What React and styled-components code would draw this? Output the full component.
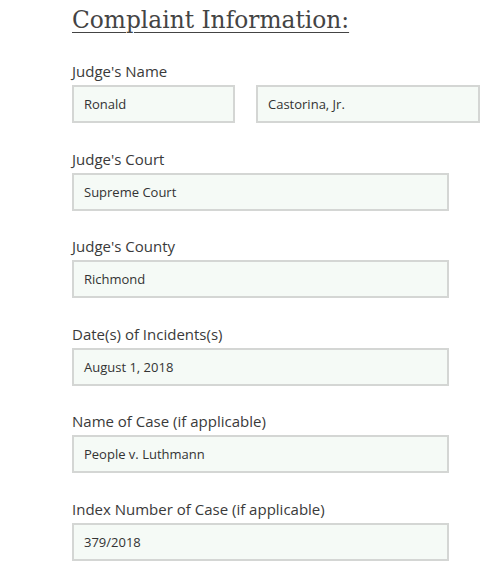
import React from 'react'
import styled, { createGlobalStyle } from 'styled-components'

const GlobalStyle = createGlobalStyle`
  body {
    margin: 0;
    background: #fff;
    font-family: 'Open Sans', 'Liberation Sans', sans-serif;
  }
`

const Page = styled.div`
  padding: 2px 0 0 72px;
`

const Title = styled.h2`
  font-family: 'DejaVu Serif', 'Liberation Serif', serif;
  font-weight: 400;
  font-size: 23.3px;
  color: #444;
  text-decoration: underline;
  text-decoration-thickness: 1px;
  text-underline-offset: 4px;
  margin: 0 0 23px;
  line-height: 36px;
`

const Field = styled.div`
  margin-bottom: 25.6px;
`

const Label = styled.div`
  font-size: 15px;
  color: #3a3a3a;
  line-height: 20px;
  margin-bottom: 4px;
`

const Row = styled.div`
  display: flex;
  gap: 21px;
`

const Input = styled.div`
  box-sizing: border-box;
  width: ${p => p.$w || 377}px;
  height: 38px;
  border: 2px solid #d4d6d4;
  background: #f5faf6;
  padding: 0 10px;
  display: flex;
  align-items: center;
  font-size: 13px;
  color: #333;
`

const fields = [
  ["Judge's Court", 'Supreme Court'],
  ["Judge's County", 'Richmond'],
  ['Date(s) of Incidents(s)', 'August 1, 2018'],
  ['Name of Case (if applicable)', 'People v. Luthmann'],
  ['Index Number of Case (if applicable)', '379/2018'],
]

export default function App() {
  return (
    <Page>
      <GlobalStyle />
      <Title>Complaint Information:</Title>
      <Field>
        <Label>Judge's Name</Label>
        <Row>
          <Input $w={163}>Ronald</Input>
          <Input $w={224}>Castorina, Jr.</Input>
        </Row>
      </Field>
      {fields.map(([label, value]) => (
        <Field key={label}>
          <Label>{label}</Label>
          <Input>{value}</Input>
        </Field>
      ))}
    </Page>
  )
}
